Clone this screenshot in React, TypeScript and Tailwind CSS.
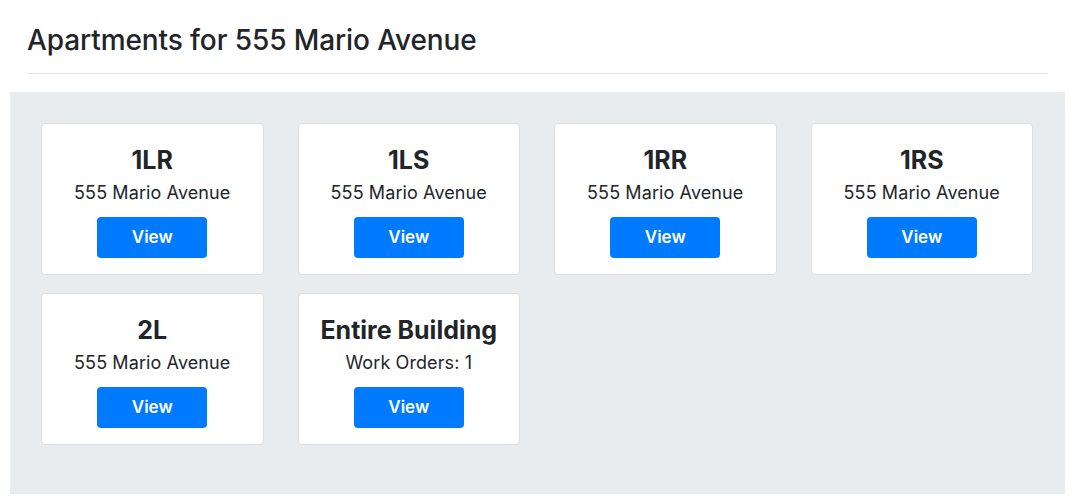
import React from "react";

const items = [
  { title: "1LR", sub: "555 Mario Avenue" },
  { title: "1LS", sub: "555 Mario Avenue" },
  { title: "1RR", sub: "555 Mario Avenue" },
  { title: "1RS", sub: "555 Mario Avenue" },
  { title: "2L", sub: "555 Mario Avenue" },
  { title: "Entire Building", sub: "Work Orders: 1" },
];

export default function App() {
  return (
    <div className="bg-white text-[#212529]" style={{ fontFamily: "Inter, 'Noto Sans', sans-serif" }}>
      <div className="px-[27px] pt-[20px]">
        <h1 className="text-[28px] leading-[40px] font-medium tracking-[-0.1px]">Apartments for 555 Mario Avenue</h1>
        <div className="mt-[13px] mr-[6px] border-t border-[#e5e5e5]" />
      </div>
      <div className="mt-[18px] mx-[10px] mr-[16px] bg-[#e9ecef] pt-[31px] pb-[49px] pl-[31px] pr-[32px]">
        <div className="grid grid-cols-4 gap-x-[34px] gap-y-[18px]">
          {items.map((it) => (
            <div key={it.title} className="bg-white border border-[#dcdfe2] rounded-[4px] h-[152px] flex flex-col items-center pt-[20px]">
              <div className="text-[25px] leading-[32px] font-bold">{it.title}</div>
              <div className="text-[18px] leading-[24px] mt-[5px] tracking-[0.1px]">{it.sub}</div>
              <button className="mt-[12px] w-[110px] h-[41px] rounded-[4px] bg-[#007bff] text-white text-[17px] font-semibold">View</button>
            </div>
          ))}
        </div>
      </div>
    </div>
  );
}
